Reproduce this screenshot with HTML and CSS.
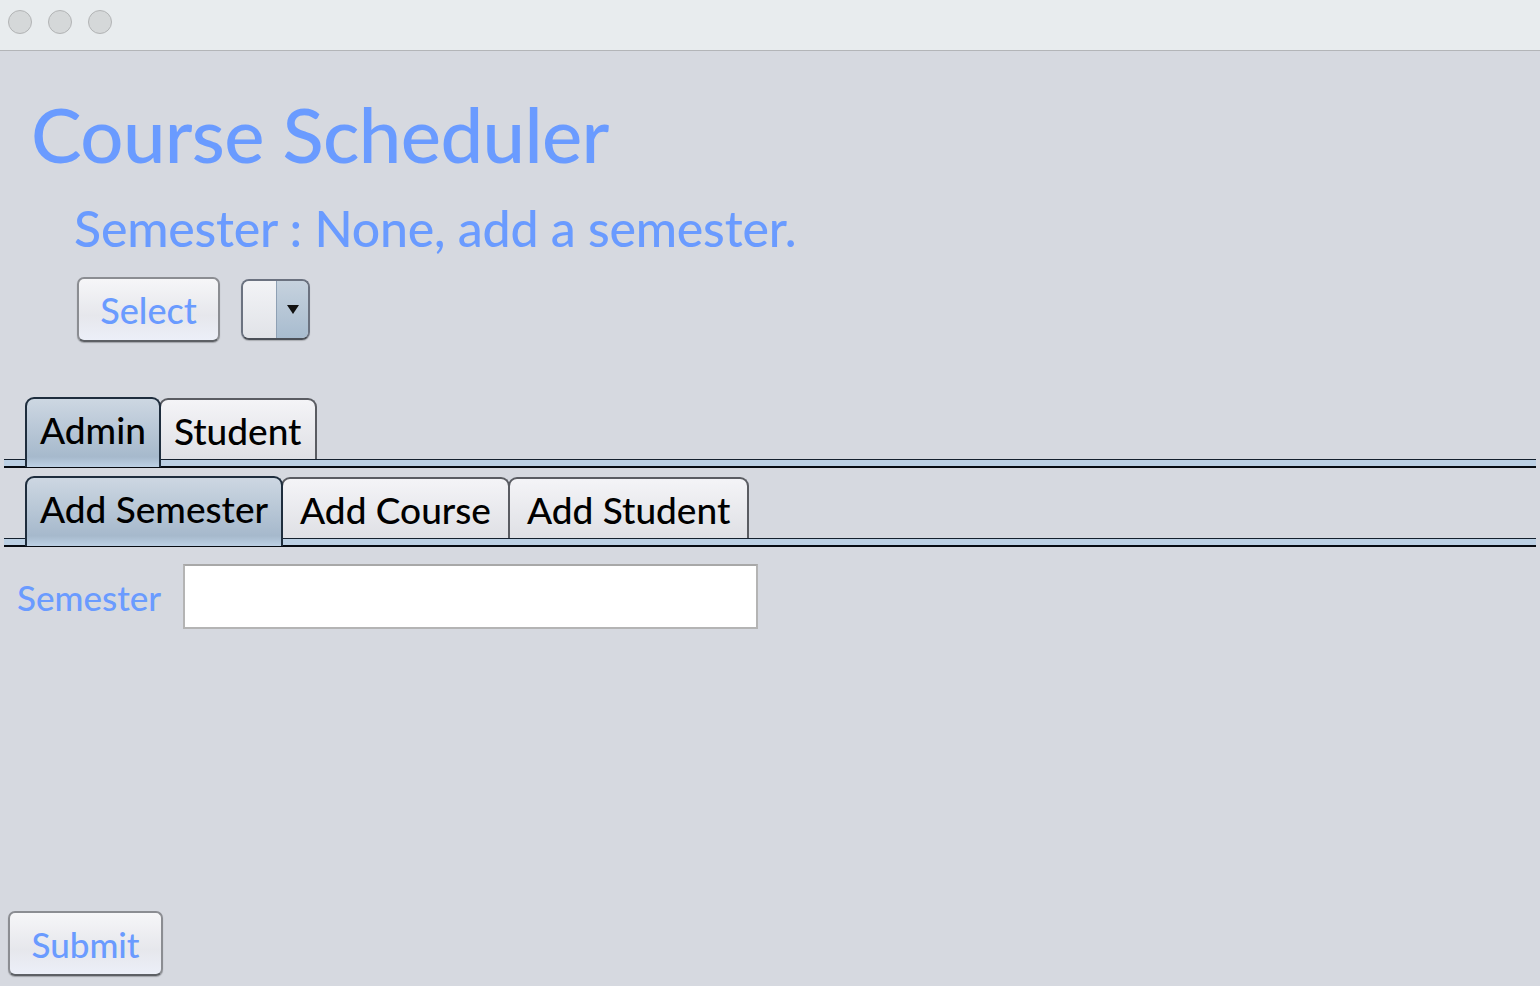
FILE: index.html
```html
<!DOCTYPE html>
<html>
<head>
<meta charset="utf-8">
<link rel="stylesheet" href="styles.css">
</head>
<body>
<div class="window">
  <div class="titlebar">
    <span class="light"></span><span class="light"></span><span class="light"></span>
  </div>
  <div class="content">
    <h1 class="title">Course Scheduler</h1>
    <div class="subtitle">Semester : None, add a semester.</div>
    <div class="select-row">
      <button class="btn select-btn">Select</button>
      <div class="combo"><span class="combo-field"></span><span class="combo-arrow"><svg width="12" height="9" viewBox="0 0 12 9"><path d="M0 0H12L6 9Z" fill="#111"/></svg></span></div>
    </div>
    <div class="tabbar tabbar-top">
      <div class="tab active">Admin</div>
      <div class="tab">Student</div>
    </div>
    <div class="tabline"></div>
    <div class="tabbar tabbar-sub">
      <div class="tab active">Add Semester</div>
      <div class="tab wide">Add Course</div>
      <div class="tab wide">Add Student</div>
    </div>
    <div class="tabline"></div>
    <div class="form-row">
      <label class="field-label">Semester</label>
      <div class="text-input"></div>
    </div>
    <div class="spacer"></div>
    <button class="btn submit-btn">Submit</button>
  </div>
</div>
</body>
</html>
```

FILE: styles.css
```css
html, body {
  margin: 0;
  padding: 0;
  height: 100%;
}
body {
  background: #d6d9e0;
  font-family: "Lato", "DejaVu Sans", sans-serif;
}
.window {
  display: flex;
  flex-direction: column;
  height: 986px;
}
.titlebar {
  background: #e8ecee;
  border-bottom: 1px solid #b3b5b8;
  display: flex;
  align-items: center;
  gap: 16px;
  padding-left: 8px;
  box-sizing: border-box;
  height: 51px;
  padding-bottom: 6px;
}
.light {
  width: 22px;
  height: 22px;
  border-radius: 50%;
  background: #d5d8d9;
  border: 1px solid #b2b4b5;
}
.content {
  flex: 1;
  display: flex;
  flex-direction: column;
  padding: 0 4px 10px 4px;
}
.title {
  margin: 38px 0 0 27px;
  font-size: 76px;
  font-weight: 500;
  color: #6a9bff;
  line-height: 90px;
  letter-spacing: -0.6px;
}
.subtitle {
  margin: 19px 0 0 70px;
  font-size: 50px;
  font-weight: 500;
  color: #6a9bff;
  line-height: 60px;
  letter-spacing: -0.2px;
}
.select-row {
  display: flex;
  align-items: center;
  gap: 21px;
  margin: 19px 0 0 73px;
}
.btn {
  font-family: "Lato", "DejaVu Sans", sans-serif;
  color: #6a9bff;
  font-weight: 500;
  border: 2px solid #8b8d92;
  border-bottom-color: #5d6065;
  border-radius: 7px;
  background: linear-gradient(#f6f6f8, #e6e7ec 60%, #eceff8);
  box-shadow: 0 1px 1px rgba(0,0,0,0.25);
  padding: 0;
}
.select-btn {
  width: 143px;
  height: 65px;
  font-size: 36px;
}
.combo {
  display: flex;
  width: 69px;
  height: 61px;
  border: 2px solid #6b7280;
  border-bottom-color: #4b5058;
  border-radius: 8px;
  box-sizing: border-box;
  overflow: hidden;
  box-shadow: 0 1px 1px rgba(0,0,0,0.2);
}
.combo-field {
  width: 33px;
  background: linear-gradient(#f2f3f6, #e1e3e8);
  border-right: 1px solid #8ea0b4;
}
.combo-arrow {
  flex: 1;
  display: flex;
  align-items: center;
  justify-content: center;
  background: linear-gradient(#c6d2de, #a8bccf);
}
.tabbar {
  display: flex;
  padding-left: 21px;
}
.tabbar-top {
  margin-top: 55px;
}
.tabbar-sub {
  margin-top: 8px;
}
.tab {
  font-size: 37px;
  color: #000;
  font-weight: 500;
  padding: 0 13px;
  height: 61px;
  line-height: 61px;
  border: 2px solid #5a5c62;
  border-bottom: none;
  border-radius: 9px 9px 0 0;
  background: linear-gradient(#f4f4f7, #dfe0e5);
  box-sizing: border-box;
  margin-top: 1px;
}
.tab.wide {
  padding: 0 17px;
}
.tab + .tab {
  margin-left: -2px;
}
.tab.active {
  margin-top: 0;
  border-color: #1e2d3d;
  background: linear-gradient(#cdd7e2, #a6b9cc 85%, #bcd0e4);
  position: relative;
  z-index: 1;
  margin-bottom: -8px;
  height: 70px;
  line-height: 62px;
}
.tabline {
  height: 6px;
  background: #bcd0e4;
  border-top: 1px solid #14202e;
  border-bottom: 2px solid #070b12;
}
.form-row {
  display: flex;
  align-items: center;
  gap: 22px;
  margin-top: 17px;
  margin-left: 13px;
}
.field-label {
  font-size: 35px;
  color: #6a9bff;
  font-weight: 500;
}
.text-input {
  width: 571px;
  height: 61px;
  background: #fff;
  border: 2px solid #b4b4b4;
  border-top-color: #a8a8a8;
}
.spacer {
  flex: 1;
}
.submit-btn {
  width: 155px;
  height: 65px;
  font-size: 35px;
  margin-left: 4px;
  align-self: flex-start;
}
```
